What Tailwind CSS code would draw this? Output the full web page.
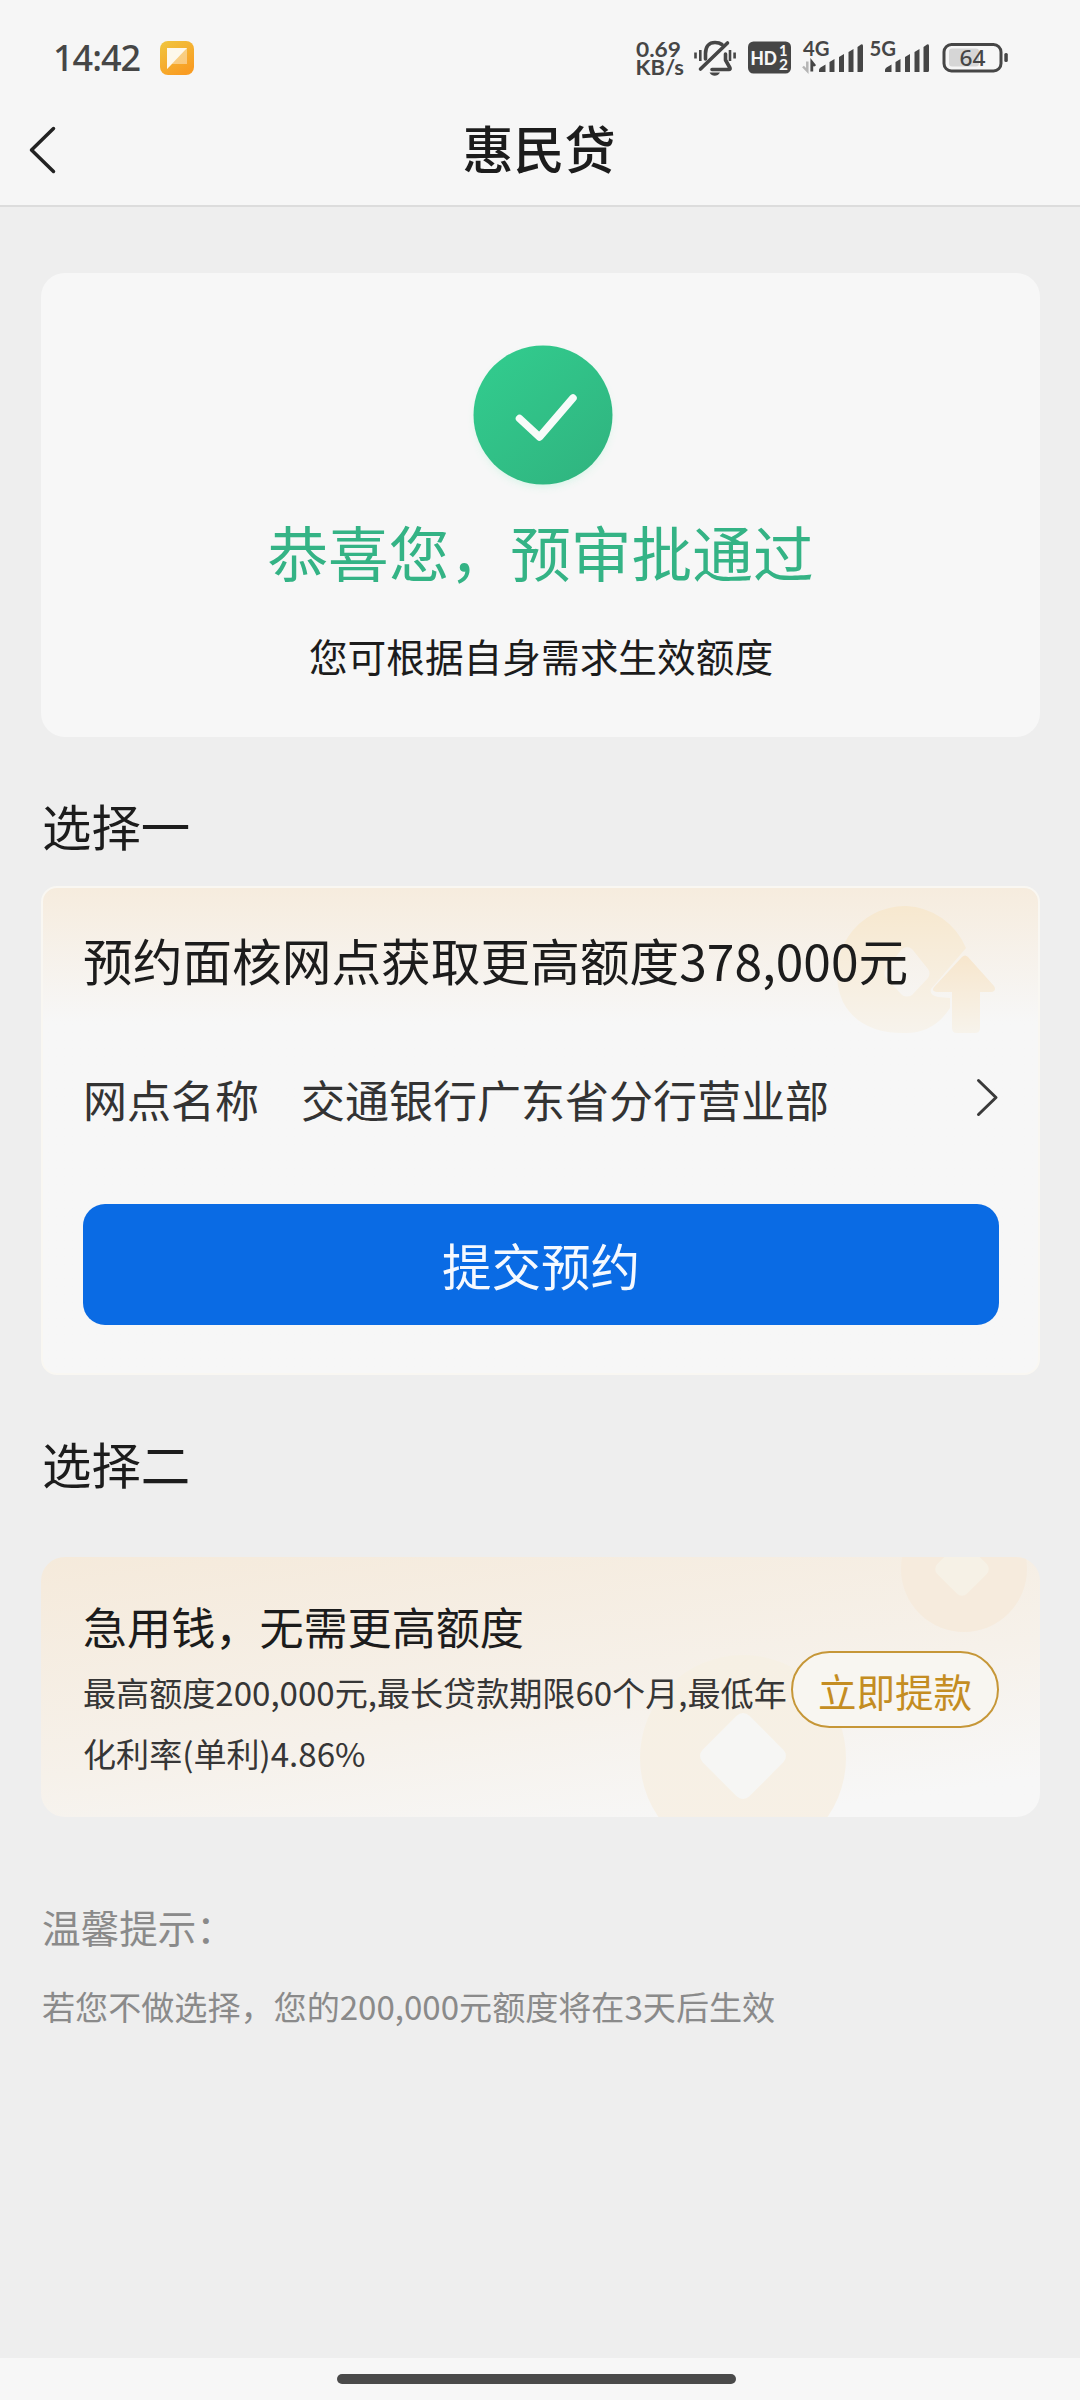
<!DOCTYPE html>
<html lang="zh-CN">
<head>
<meta charset="utf-8">
<title>惠民贷</title>
<script src="https://cdn.jsdelivr.net/npm/@tailwindcss/browser@4"></script>
</head>
<body class="w-[1080px] h-[2400px] overflow-hidden bg-[#eeeeee] text-[#1c1c1c] font-['Noto_Sans_CJK_SC',sans-serif] flex flex-col">
  <header class="h-[207px] shrink-0 bg-[#f6f6f6] border-b-2 border-[#dcdcdc] flex flex-col">
    <div class="h-[94px] pt-[20px] pl-[53px] flex items-start">
      <div class="h-[76px] w-[107px] flex items-center text-[36px] font-medium text-[#464646] font-['Noto_Sans',sans-serif] tracking-[-1px]">14:42</div>
      <svg class="mt-[21px] w-[34px] h-[34px]" viewBox="0 0 34 34">
        <defs><linearGradient id="app" x1="0" y1="0" x2=".6" y2="1"><stop offset="0" stop-color="#f0c63f"/><stop offset="1" stop-color="#f99d23"/></linearGradient></defs>
        <rect width="34" height="34" rx="8" fill="url(#app)"/>
        <path d="M7 7H27V23H12L7 28Z" fill="#fff" opacity=".4"/>
        <path d="M7 7H27L7 28Z" fill="#fdf8ec"/>
      </svg>
      <div class="ml-[442px] h-[80px] flex items-start gap-[10px]">
        <svg class="w-[48px] h-[80px] font-['Lato',sans-serif] font-bold" viewBox="636 20 48 80" fill="#464646">
          <text x="636" y="56.500" font-size="20.500" textLength="45" lengthAdjust="spacingAndGlyphs">0.69</text>
          <text x="635.500" y="75" font-size="20" textLength="48.500" lengthAdjust="spacingAndGlyphs">KB/s</text>
        </svg>
        <svg class="w-[43px] h-[80px]" viewBox="694 20 43 80" fill="none" stroke="#464646" stroke-width="3.600" stroke-linecap="round">
          <path d="M700.500 69L727.500 43"/>
          <path d="M705.500 59V53.500C705.500 46.500 709 42.500 715 42.500C718 42.500 720 43 722 44.500"/>
          <path d="M725.500 54V60L730 68Q730.500 69.500 729 69.500H712" stroke-linejoin="round"/>
          <path d="M709.500 72.500H720Q718 75.800 714.700 75.800Q711.500 75.800 709.500 72.500Z" fill="#464646" stroke="none"/>
          <path d="M695.500 52.500V58.500M700.300 50V61M730 50V61M734.600 52.500V58.500" stroke-width="2.600" stroke-linecap="butt"/>
        </svg>
        <svg class="w-[44px] h-[80px] font-['Lato',sans-serif] font-bold" viewBox="747 20 44 80">
          <rect x="748" y="41.500" width="43" height="32" rx="5.500" fill="#464646"/>
          <g fill="#f6f6f6"><text x="750.500" y="64.500" font-size="19" textLength="26.500" lengthAdjust="spacingAndGlyphs" font-weight="900">HD</text>
          <text x="779" y="55.500" font-size="14.500" textLength="8.500" lengthAdjust="spacingAndGlyphs">1</text><text x="779" y="70" font-size="15.500" textLength="9" lengthAdjust="spacingAndGlyphs">2</text></g>
        </svg>
        <svg class="w-[128px] h-[80px] font-['Lato',sans-serif] font-bold" viewBox="801 20 128 80" fill="#464646">
          <text x="803" y="56.300" font-size="20" textLength="26.500" lengthAdjust="spacingAndGlyphs">4G</text>
          <text x="869.500" y="56.300" font-size="20" textLength="26.500" lengthAdjust="spacingAndGlyphs">5G</text>
          <path d="M807.300 61.500V71L803 66.500" fill="none" stroke="#b5b5b5" stroke-width="2.500"/>
          <path d="M811.800 71.500V62L815 66" fill="none" stroke="#464646" stroke-width="2.800"/>
          <g id="bars"><path d="M819 72V70Q819 68.500 820.500 67.500L825.500 64.500V72ZM829.500 72V62L834.500 59V72ZM839 72V57L844 54V72ZM848.500 72V52L853.500 49V72ZM857.500 72V47L861 44.500Q863 43.500 863 46V70.500Q863 72 861.500 72Z"/></g>
          <use href="#bars" x="66"/>
        </svg>
        <svg class="ml-[3px] w-[68px] h-[80px] font-['Noto_Sans',sans-serif] font-medium" viewBox="942 20 68 80">
          <rect x="949" y="48.500" width="30" height="18" rx="3" fill="#d6d6d6"/>
          <rect x="944" y="44.500" width="57" height="26.500" rx="7.500" fill="none" stroke="#464646" stroke-width="3"/>
          <rect x="1004.300" y="53" width="3.500" height="9" rx="1.500" fill="#464646"/>
          <text x="959.500" y="65.500" font-size="22" fill="#464646" textLength="26" lengthAdjust="spacingAndGlyphs">64</text>
        </svg>
      </div>
    </div>
    <div class="h-[108px] grid grid-cols-[60px_1fr_60px] items-center">
      <svg class="mt-[3px] ml-[28px] w-[30px] h-[52px]" viewBox="28 124 30 52" fill="none" stroke="#222" stroke-width="3.500" stroke-linecap="round" stroke-linejoin="round"><path d="M53.500 128.500L31.500 150L53.500 171.500"/></svg>
      <h1 class="-mt-[2px] -ml-[2px] text-center text-[51px] leading-[70px] font-medium">惠民贷</h1>
    </div>
  </header>

  <main class="grow px-[41px] pt-[66px] flex flex-col">
    <section class="h-[464px] w-[999px] rounded-[24px] bg-[#f7f7f7] flex flex-col items-center">
      <svg class="mt-[60px] ml-[4px] w-[164px] h-[164px]" viewBox="0 0 164 164">
        <defs><linearGradient id="ok" x1="0" y1="0.100" x2=".8" y2="1"><stop offset="0" stop-color="#32cc8e"/><stop offset="1" stop-color="#30b580"/></linearGradient>
        <filter id="glow" x="-20%" y="-20%" width="140%" height="150%"><feGaussianBlur stdDeviation="5"/></filter></defs>
        <circle cx="82" cy="86" r="66" fill="#8ff0c4" opacity=".45" filter="url(#glow)"/>
        <circle cx="82" cy="82" r="69.500" fill="url(#ok)"/>
        <path d="M58.500 85.500L78.500 104L112 65" fill="none" stroke="#f7fbf9" stroke-width="7.500" stroke-linecap="round" stroke-linejoin="round"/>
      </svg>
      <h2 class="mt-[12px] text-[60.700px] leading-[84px] text-[#34b385]">恭喜您，预审批通过</h2>
      <p class="mt-[34px] ml-[1px] text-[38.700px] leading-[56px]">您可根据自身需求生效额度</p>
    </section>

    <h3 class="mt-[53px] ml-[1px] text-[49.400px] leading-[70px]">选择一</h3>

    <section class="relative mt-[26px] h-[489px] w-[999px] rounded-[16px] border-2 border-[#f9f7f2] bg-[#f7f7f7] bg-linear-to-b from-[#f6ecde] to-[#f7f7f7] to-[135px] px-[40px] flex flex-col">
      <svg class="absolute left-[780px] top-[10px] w-[190px] h-[150px]" viewBox="823 898 190 150">
        <defs><linearGradient id="coin1" x1="0" y1="0" x2="0" y2="1"><stop offset="0" stop-color="#f7e8cf"/><stop offset="1" stop-color="#f7f3ec"/></linearGradient>
        <linearGradient id="arrow" x1="0" y1="0" x2="0" y2="1"><stop offset="0" stop-color="#f7e6cd"/><stop offset="1" stop-color="#f7f3eb"/></linearGradient></defs>
        <path d="M906 906A68 68 0 0 1 966 948L931 989Q929 995 938 997L950 998V1008Q934 1033 906 1033Q860 1034 843 1002A68 68 0 0 1 906 906ZM902 949L886 969Q883 973 886 978L902 995Q907 998 912 995L928 978Q931 973 928 969L912 949Q907 945 902 949Z" fill="url(#coin1)" fill-rule="evenodd"/>
        <path d="M962 957Q965 954 968 957L994 986Q997 991 991 992H980V1028Q980 1033 975 1033H957Q952 1033 952 1028V992H937Q930 991 935 986Z" fill="url(#arrow)"/>
      </svg>
      <h4 class="relative mt-[35px] text-[49.700px] leading-[72px] whitespace-nowrap">预约面核网点获取更高额度378,000元</h4>
      <div class="mt-[69px] h-[70px] flex items-center text-[44px] leading-[70px] text-[#333]">
        <span class="w-[218px]">网点名称</span>
        <span class="grow">交通银行广东省分行营业部</span>
        <svg class="w-[24px] h-[44px] -mr-[1px] mt-[-2px]" viewBox="976 1078 24 44" fill="none" stroke="#3a3a3a" stroke-width="3" stroke-linecap="round" stroke-linejoin="round"><path d="M979.500 1082.500L997 1099.500L979.500 1116.500"/></svg>
      </div>
      <button class="mt-[70px] h-[121px] w-[916px] rounded-[22px] bg-[#0a6be4] text-[49.500px] leading-[72px] text-[#f5f9ff]">提交预约</button>
    </section>

    <h3 class="mt-[53px] ml-[1px] text-[49.400px] leading-[70px]">选择二</h3>

    <section class="relative mt-[59px] h-[260px] w-[999px] overflow-hidden rounded-[24px] bg-linear-172 from-[#f5eadb] via-[#f6f1ea] via-55% to-[#f7f7f7] to-90% px-[42px] flex items-start justify-between">
      <svg class="absolute left-0 top-0 w-[999px] h-[260px]" viewBox="41 1557 999 260">
        <defs><linearGradient id="coin2" x1="0" y1="0" x2="0" y2="1"><stop offset="0" stop-color="#f6f0e4"/><stop offset="1" stop-color="#f7f0e6"/></linearGradient></defs>
        <circle cx="964" cy="1569" r="63" fill="#f6ebdd"/>
        <rect x="-21" y="-21" width="42" height="42" rx="7" fill="#f6f1e6" transform="translate(962 1569) rotate(45)"/>
        <circle cx="743" cy="1758" r="103" fill="url(#coin2)"/>
        <rect x="-33" y="-33" width="66" height="66" rx="9" fill="#f6f6f4" transform="translate(743 1756) rotate(45)"/>
      </svg>
      <div class="relative mt-[37px]">
        <h4 class="text-[44.100px] leading-[64px]">急用钱，无需更高额度</h4>
        <p class="mt-[4px] text-[33.100px] leading-[61px] text-[#363636] whitespace-nowrap">最高额度200,000元,最长贷款期限60个月,最低年<br>化利率(单利)4.86%</p>
      </div>
      <button class="absolute left-[750px] top-[94px] h-[77px] w-[208px] rounded-full border-2 border-[#c69738] bg-[#f8f6f1] text-[38.500px] leading-[56px] text-[#c48d22]">立即提款</button>
    </section>

    <div class="mt-[81px] ml-[1px] text-[#8a8a8a]">
      <h5 class="text-[38.600px] leading-[56px]">温馨提示：</h5>
      <p class="mt-[27px] text-[33.100px] leading-[50px]">若您不做选择，您的200,000元额度将在3天后生效</p>
    </div>
  </main>

  <footer class="h-[42px] shrink-0 bg-[#f7f7f7] flex justify-center">
    <div class="mt-[16px] h-[10px] w-[399px] rounded-full bg-[#4a4a4a] -ml-[7px]"></div>
  </footer>
</body>
</html>
